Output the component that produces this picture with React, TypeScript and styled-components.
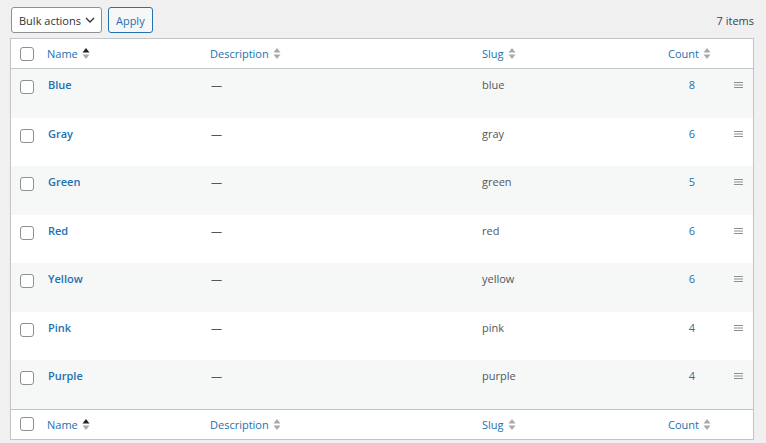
import React from 'react';
import styled, { createGlobalStyle } from 'styled-components';

const GlobalStyle = createGlobalStyle`
  body {
    margin: 0;
    background: #f0f0f1;
    font-family: "Open Sans", "Noto Sans", sans-serif;
    font-size: 11px;
    color: #3c434a;
  }
`;

interface Term {
  name: string;
  slug: string;
  count: number;
}

const terms: Term[] = [
  { name: 'Blue', slug: 'blue', count: 8 },
  { name: 'Gray', slug: 'gray', count: 6 },
  { name: 'Green', slug: 'green', count: 5 },
  { name: 'Red', slug: 'red', count: 6 },
  { name: 'Yellow', slug: 'yellow', count: 6 },
  { name: 'Pink', slug: 'pink', count: 4 },
  { name: 'Purple', slug: 'purple', count: 4 },
];

const Page = styled.div`
  padding: 7px 12px 0 10px;
  width: 744px;
`;

const TopBar = styled.div`
  display: flex;
  align-items: center;
  height: 26px;
  margin-bottom: 5px;
`;

const Select = styled.div`
  display: flex;
  align-items: center;
  gap: 4px;
  box-sizing: border-box;
  height: 26px;
  margin-left: 1px;
  padding: 0 6px 0 7px;
  border: 1px solid #8c8f94;
  border-radius: 3px;
  background: #fff;
  color: #2c3338;
`;

const Button = styled.div`
  display: flex;
  align-items: center;
  box-sizing: border-box;
  height: 26px;
  margin-left: 6px;
  padding: 0 7px;
  border: 1px solid #2271b1;
  border-radius: 3px;
  background: #f6f7f7;
  color: #2271b1;
`;

const Count = styled.div`
  margin-left: auto;
  color: #3c434a;
`;

const Table = styled.div`
  border: 1px solid #c3c4c7;
  background: #fff;
  box-shadow: 0 1px 1px rgba(0, 0, 0, 0.04);
`;

const Grid = styled.div`
  display: grid;
  grid-template-columns: 36px 163px 272px 1fr 80px 38px;
`;

const HeadRow = styled(Grid)<{ $footer?: boolean }>`
  height: 29px;
  align-items: center;
  border-bottom: ${(p) => (p.$footer ? 'none' : '1px solid #c3c4c7')};
  border-top: ${(p) => (p.$footer ? '1px solid #c3c4c7' : 'none')};
`;

const BodyRow = styled(Grid)<{ $alt: boolean }>`
  height: 48.5px;
  align-items: start;
  background: ${(p) => (p.$alt ? '#f6f7f7' : '#fff')};
`;

const CheckCell = styled.div<{ $top?: number }>`
  padding-left: 9px;
  padding-top: ${(p) => p.$top ?? 0}px;
  display: flex;
`;

const Checkbox = styled.span`
  box-sizing: border-box;
  width: 14px;
  height: 14px;
  border: 1px solid #8c8f94;
  border-radius: 3px;
  background: #fff;
`;

const HeadCell = styled.div<{ $right?: boolean }>`
  display: flex;
  align-items: center;
  gap: 4px;
  justify-content: ${(p) => (p.$right ? 'flex-end' : 'flex-start')};
  padding-right: ${(p) => (p.$right ? '4px' : '0')};
  color: #2271b1;
`;

const Cell = styled.div<{ $right?: boolean; $tone?: 'link' | 'text' }>`
  padding-top: 8px;
  line-height: 16px;
  text-align: ${(p) => (p.$right ? 'right' : 'left')};
  padding-right: ${(p) => (p.$right ? '20px' : '0')};
  color: ${(p) => (p.$tone === 'link' ? '#2271b1' : '#50575e')};
`;

const NameLink = styled.span`
  color: #2271b1;
  font-weight: 600;
  padding-left: 1px;
`;

const Dash = styled.span`
  padding-left: 1px;
  color: #50575e;
`;

const Handle = styled.div`
  padding: 13px 0 0 19px;
  display: flex;
`;

function SortIcon({ active }: { active?: boolean }) {
  return (
    <svg width='8' height='13' viewBox='0 0 8 13'>
      <polygon points='0.5,5.5 4,1 7.5,5.5' fill={active ? '#1d2327' : '#a7aaad'} />
      <polygon points='0.5,7.5 4,12 7.5,7.5' fill='#a7aaad' />
    </svg>
  );
}

function Chevron() {
  return (
    <svg width='10' height='6' viewBox='0 0 10 6'>
      <path d='M1 1l4 4 4-4' fill='none' stroke='#2c3338' strokeWidth='1.3' />
    </svg>
  );
}

function Lines() {
  return (
    <svg width='9' height='6' viewBox='0 0 9 6'>
      <rect x='0' y='0' width='9' height='1' fill='#8c8f94' />
      <rect x='0' y='2.5' width='9' height='1' fill='#8c8f94' />
      <rect x='0' y='5' width='9' height='1' fill='#8c8f94' />
    </svg>
  );
}

function Header({ footer }: { footer?: boolean }) {
  return (
    <HeadRow $footer={footer}>
      <CheckCell>
        <Checkbox />
      </CheckCell>
      <HeadCell>Name <SortIcon active /></HeadCell>
      <HeadCell>Description <SortIcon /></HeadCell>
      <HeadCell>Slug <SortIcon /></HeadCell>
      <HeadCell $right>Count <SortIcon /></HeadCell>
      <div />
    </HeadRow>
  );
}

export default function App() {
  return (
    <Page>
      <GlobalStyle />
      <TopBar>
        <Select>Bulk actions <Chevron /></Select>
        <Button>Apply</Button>
        <Count>7 items</Count>
      </TopBar>
      <Table>
        <Header />
        {terms.map((t, i) => (
          <BodyRow key={t.slug} $alt={i % 2 === 0}>
            <CheckCell $top={11}>
              <Checkbox />
            </CheckCell>
            <Cell><NameLink>{t.name}</NameLink></Cell>
            <Cell><Dash>—</Dash></Cell>
            <Cell>{t.slug}</Cell>
            <Cell $right $tone='link'>{t.count}</Cell>
            <Handle><Lines /></Handle>
          </BodyRow>
        ))}
        <Header footer />
      </Table>
    </Page>
  );
}
